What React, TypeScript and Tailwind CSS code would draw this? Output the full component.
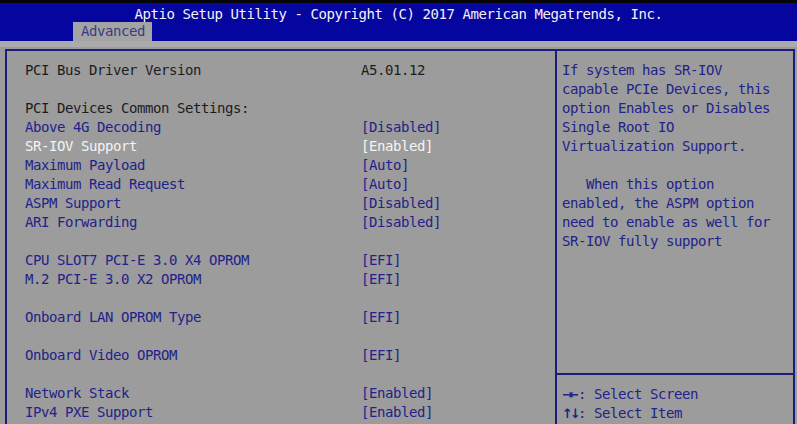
import React from "react";

type Row = { label?: string; value?: string; kind?: "text" | "item" | "sel" };

const rows: Row[] = [
  { label: "PCI Bus Driver Version", value: "A5.01.12", kind: "text" },
  {},
  { label: "PCI Devices Common Settings:", kind: "text" },
  { label: "Above 4G Decoding", value: "[Disabled]", kind: "item" },
  { label: "SR-IOV Support", value: "[Enabled]", kind: "sel" },
  { label: "Maximum Payload", value: "[Auto]", kind: "item" },
  { label: "Maximum Read Request", value: "[Auto]", kind: "item" },
  { label: "ASPM Support", value: "[Disabled]", kind: "item" },
  { label: "ARI Forwarding", value: "[Disabled]", kind: "item" },
  {},
  { label: "CPU SLOT7 PCI-E 3.0 X4 OPROM", value: "[EFI]", kind: "item" },
  { label: "M.2 PCI-E 3.0 X2 OPROM", value: "[EFI]", kind: "item" },
  {},
  { label: "Onboard LAN OPROM Type", value: "[EFI]", kind: "item" },
  {},
  { label: "Onboard Video OPROM", value: "[EFI]", kind: "item" },
  {},
  { label: "Network Stack", value: "[Enabled]", kind: "item" },
  { label: "IPv4 PXE Support", value: "[Enabled]", kind: "item" },
];

const help = [
  "If system has SR-IOV",
  "capable PCIe Devices, this",
  "option Enables or Disables",
  "Single Root IO",
  "Virtualization Support.",
  "",
  "   When this option",
  "enabled, the ASPM option",
  "need to enable as well for",
  "SR-IOV fully support",
];

function colorFor(kind?: Row["kind"]) {
  if (kind === "sel") return "text-[#f4f4f4]";
  if (kind === "item") return "text-[#22228a]";
  return "text-[#1c1c1c]";
}

export default function App() {
  return (
    <div
      className="w-[797px] h-[424px] overflow-hidden bg-[#9c9c9c] text-[14px] leading-[19px] tracking-[-0.43px] whitespace-pre"
      style={{ fontFamily: '"DejaVu Sans Mono", "Liberation Mono", monospace' }}
    >
      {/* header */}
      <div className="h-[3px] bg-[#050505]" />
      <div className="h-[38px] bg-[#0505a0] flex flex-col">
        <div className="pt-[2px] h-[19px] text-center text-[#f2f2f2]">
          Aptio Setup Utility - Copyright (C) 2017 American Megatrends, Inc.
        </div>
        <div className="mt-auto ml-[73px] w-[79px] h-[19px] bg-[#a4a4a4] pl-[8px] text-[#3a3a86]">
          Advanced
        </div>
      </div>

      {/* lighter strip under header */}
      <div className="h-[6px] bg-[#ababab]" />
      <div className="h-[2px]" />

      {/* main panel */}
      <div className="ml-[5px] mr-[2px] h-[400px] border-2 border-[#1c1c7a] flex">
        <div className="w-[548px] pl-[18px] pt-[10px]">
          {rows.map((r, i) => (
            <div key={i} className={`flex h-[19px] ${colorFor(r.kind)}`}>
              <span className="w-[336px]">{r.label ?? ""}</span>
              <span>{r.value ?? ""}</span>
            </div>
          ))}
        </div>

        <div className="flex-1 border-l-[2px] border-[#1c1c7a] flex flex-col">
          <div className="h-[322px] pl-[5px] pt-[10px] text-[#22228a]">
            {help.map((l, i) => (
              <div key={i} className="h-[19px]">
                {l}
              </div>
            ))}
          </div>
          <div className="border-t-2 border-[#1c1c7a] pl-[5px] pt-[10px] text-[#22228a]">
            <div className="h-[19px] flex items-center">
              <span
                className="w-[16px] overflow-hidden text-[13px] font-bold tracking-[-4px]"
                style={{ fontFamily: '"DejaVu Sans", sans-serif' }}
              >
                →←
              </span>
              <span>: Select Screen</span>
            </div>
            <div className="h-[19px] flex items-center">
              <span
                className="w-[16px] overflow-hidden text-[13px] font-bold tracking-[-3px]"
                style={{ fontFamily: '"DejaVu Sans", sans-serif' }}
              >
                ↑↓
              </span>
              <span>: Select Item</span>
            </div>
          </div>
        </div>
      </div>
    </div>
  );
}
